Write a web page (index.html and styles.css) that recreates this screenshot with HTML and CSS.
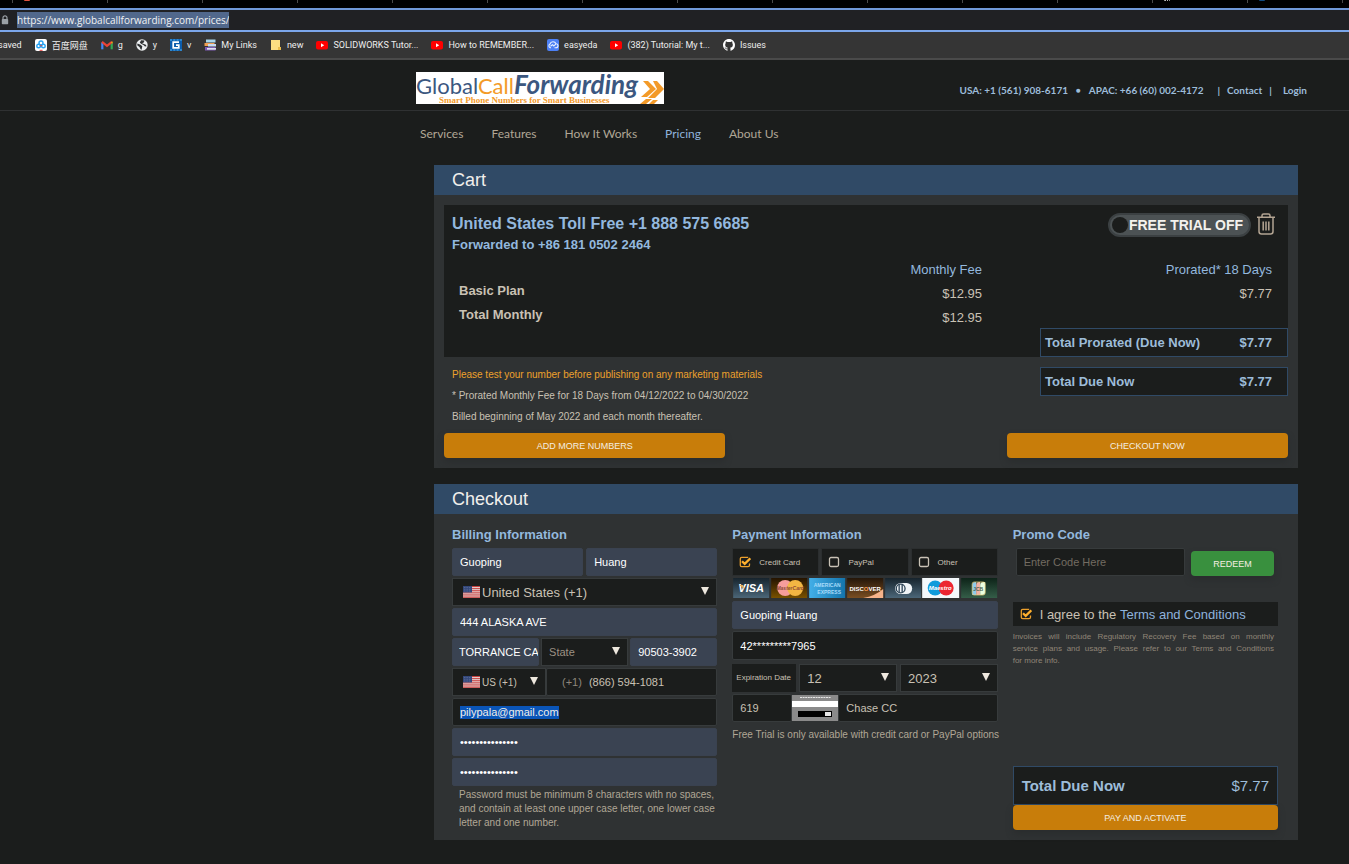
FILE: index.html
```html
<!DOCTYPE html>
<html lang="en">
<head>
<meta charset="utf-8">
<title>Global Call Forwarding - Prices</title>
<link rel="stylesheet" href="styles.css">
</head>
<body>
<svg width="0" height="0" class="defs" aria-hidden="true">
  <symbol id="yt" viewBox="0 0 12 12"><rect y="2" width="12" height="8.500" rx="2" fill="#f00"/><path d="M5 4.300v4l3.200-2z" fill="#fff"/></symbol>
  <symbol id="flag" viewBox="0 0 17 12">
    <rect width="17" height="12" fill="#e6dcdc"/>
    <path d="M0 .5h17M0 2.400h17M0 4.300h17M0 6.200h17M0 8.100h17M0 10h17M0 11.700h17" stroke="#c8403f"/>
    <rect width="9" height="6.500" fill="#33477a"/>
    <path d="M1 1.500h7M1 3.300h7M1 5h7" stroke="#8290b5" stroke-width=".6" stroke-dasharray=".7 1"/>
  </symbol>
  <symbol id="box" viewBox="0 0 12 12"><rect x="1.500" y="1.500" width="9" height="9" rx="1.500" fill="none" stroke="#c9c2b6" stroke-width="1.300"/></symbol>
  <symbol id="checked" viewBox="0 0 12 12"><path d="M10.500 7.500v1.800q0 1.400-1.400 1.400H2.700q-1.400 0-1.400-1.400V2.800q0-1.400 1.400-1.400h6.500" fill="none" stroke="#eda12c" stroke-width="1.300"/><path d="M3 5.200l2.700 2.700 5.600-5.500" fill="none" stroke="#ffb02e" stroke-width="2.200"/></symbol>
</svg>

<header class="browser">
  <div class="tabs"><i><b class="red"></b></i><i></i><i></i><i></i><i></i><i></i><i></i><i></i><i></i><i></i><i></i><i></i><i><b class="dots"></b></i><i><b class="blue"></b></i><i></i></div>
  <div class="address">
    <svg class="lock" viewBox="0 0 8 10"><path d="M2 4.500V2.800a2 2 0 0 1 4 0v1.700" fill="none" stroke="#9aa0a6" stroke-width="1.200"/><rect x=".8" y="4" width="6.400" height="5.200" rx=".8" fill="#9aa0a6"/></svg>
    <input class="url" type="text" aria-label="Address" value="https://www.globalcallforwarding.com/prices/">
  </div>
  <nav class="bookmarks" aria-label="Bookmarks">
    <a href="#">saved</a>
    <a href="#"><svg viewBox="0 0 12 12"><rect width="12" height="12" rx="2" fill="#fff"/><g fill="none" stroke-width="1.400"><circle cx="6" cy="4" r="2" stroke="#2aa5f5"/><circle cx="3.600" cy="7" r="1.800" stroke="#25a2f3"/><circle cx="8.400" cy="7" r="1.800" stroke="#2aa5f5"/></g><path d="M4.600 11.300h3" stroke="#e8413c"/><circle cx="6" cy="6.600" r=".8" fill="#e8413c"/></svg>百度网盘</a>
    <a href="#"><svg viewBox="0 0 12 12"><path d="M1.300 10.300V3.500" stroke="#4285f4" stroke-width="2.200"/><path d="M10.700 10.300V3.500" stroke="#34a853" stroke-width="2.200"/><path d="M1 2.800l5 4 5-4" fill="none" stroke="#ea4335" stroke-width="2.200"/><path d="M10 3.300l1.500-1v2.500z" fill="#fbbc04"/></svg>g</a>
    <a href="#"><svg viewBox="0 0 12 12"><circle cx="6" cy="6" r="5.700" fill="#eceff1"/><path d="M1.500 4.500l3 1.300 1.800 1.500-.7 3.400-1-.5L3.500 8 1.200 6.200zM5 1.200l3.500.4L7.800 3.500 6 4.300l3.800 1.500.8 1.500L9 7.500 7.500 6 5.500 5 3.800 3.700z" fill="#303335"/></svg>y</a>
    <a href="#"><svg viewBox="0 0 12 12"><rect width="12" height="12" fill="#0b5cad"/><path d="M0 1h12M0 11h12" stroke="#55b4ee" stroke-dasharray="2 1.300"/><path d="M9 3.200H3.200v5.700h5.600V6.200H6" fill="none" stroke="#fff" stroke-width="1.700"/></svg>v</a>
    <a href="#"><svg viewBox="0 0 12 12"><path d="M2 .5h9.500v3H2z" fill="#a9d6ea"/><path d="M.5 4h10v3H.5z" fill="#f0a052"/><path d="M4 5h8v2.500H4z" fill="#c6daf0"/><path d="M1 8h10.500v3.500H1z" fill="#7c5ab5"/><path d="M3 9h9v1.700H3z" fill="#dfe3ee"/></svg>My Links</a>
    <a href="#"><svg viewBox="0 0 12 12"><path d="M1 1h9v10H1z" fill="#fbdd82"/><path d="M8 8h3v3H8z" fill="#e9bc4d"/></svg>new</a>
    <a href="#"><svg><use href="#yt"/></svg>SOLIDWORKS Tutor...</a>
    <a href="#"><svg><use href="#yt"/></svg>How to REMEMBER...</a>
    <a href="#"><svg viewBox="0 0 12 12"><rect width="12" height="12" rx="2" fill="#4c80f5"/><path d="M4 8.700H3.300A2 2 0 0 1 3 5a3.200 3.200 0 0 1 6-.3 2 2 0 0 1 0 4H7.500M3.500 7.200l2-1.500 1.300 1.200 2-1.700" fill="none" stroke="#e9f0ff" stroke-width="1.100"/></svg>easyeda</a>
    <a href="#"><svg><use href="#yt"/></svg>(382) Tutorial: My t...</a>
    <a href="#"><svg viewBox="0 0 16 16"><path fill="#fff" d="M8 0C3.580 0 0 3.580 0 8c0 3.540 2.290 6.530 5.470 7.590.4.070.55-.17.55-.38 0-.19-.01-.82-.01-1.490-2.010.37-2.530-.49-2.690-.94-.09-.23-.48-.94-.82-1.130-.28-.15-.68-.52-.01-.53.63-.01 1.080.58 1.230.82.720 1.210 1.870.87 2.330.66.070-.52.28-.87.51-1.070-1.780-.2-3.640-.89-3.640-3.950 0-.87.31-1.590.82-2.150-.08-.2-.36-1.020.08-2.120 0 0 .67-.21 2.200.82.640-.18 1.320-.27 2-.27s1.360.09 2 .27c1.530-1.040 2.200-.82 2.200-.82.440 1.100.16 1.920.08 2.120.51.560.82 1.270.82 2.150 0 3.070-1.870 3.750-3.650 3.950.29.250.54.730.54 1.480 0 1.070-.01 1.930-.01 2.200 0 .21.150.46.55.38A8.010 8.010 0 0 0 16 8c0-4.420-3.580-8-8-8z"/></svg>Issues</a>
  </nav>
</header>

<div class="masthead">
  <a href="#" class="logo" aria-label="Global Call Forwarding">
    <svg viewBox="0 0 248 32">
      <rect width="248" height="32" fill="#fff"/>
      <text x="0" y="22" fill="#3b5780" class="wordmark">Global<tspan fill="#f39a28">Call</tspan><tspan class="forward">Forwarding</tspan></text>
      <text x="23" y="31" fill="#f39a28" class="tagline">Smart Phone Numbers for Smart Businesses</text>
      <g fill="#f39a28"><path d="M227 9h5l8 8-9 8h-6l9-8z"/><path d="M237 9h4l7 8-9 9h-7l9-9z"/><path d="M224 32l6-5h6l-6 5zM233 32l4-4h5l-4 4z"/></g>
    </svg>
  </a>
  <nav class="contact" aria-label="Contact">
    <a href="#">USA: +1 (561) 908-6171</a><span class="dot">●</span><a href="#">APAC: +66 (60) 002-4172</a><span class="bar first">|</span><a href="#">Contact</a><span class="bar">|</span><a href="#" class="login">Login</a>
  </nav>
</div>
<nav class="menu" aria-label="Main">
  <a href="#">Services</a><a href="#">Features</a><a href="#">How It Works</a><a href="#" class="active">Pricing</a><a href="#">About Us</a>
</nav>

<main>
  <section class="panel">
    <h1>Cart</h1>
    <div class="cart">
      <div class="order">
        <div class="order-head">
          <div>
            <h2>United States Toll Free +1 888 575 6685</h2>
            <p class="forwarded">Forwarded to +86 181 0502 2464</p>
          </div>
          <div class="actions">
            <button class="trial" type="button"><span class="knob"></span>FREE TRIAL OFF</button>
            <button class="trash" type="button" aria-label="Remove">
              <svg viewBox="0 0 20 22" fill="none" stroke="#b3a492" stroke-width="1.500"><path d="M1 4.300h18M6 4V2.600Q6 1 7.600 1h4.800Q14 1 14 2.600V4M3 5v13.500Q3 21 5.500 21h9q2.500 0 2.500-2.500V5M7.200 8.500v9M10 8.500v9M12.800 8.500v9"/></svg>
            </button>
          </div>
        </div>
        <table class="fees">
          <thead><tr><td></td><th scope="col">Monthly Fee</th><th scope="col">Prorated* 18 Days</th></tr></thead>
          <tbody>
            <tr><th scope="row">Basic Plan</th><td>$12.95</td><td>$7.77</td></tr>
            <tr><th scope="row">Total Monthly</th><td>$12.95</td><td></td></tr>
          </tbody>
        </table>
        <div class="total"><span>Total Prorated (Due Now)</span><span>$7.77</span></div>
      </div>
      <div class="summary">
        <div class="notes">
          <p class="warn">Please test your number before publishing on any marketing materials</p>
          <p>* Prorated Monthly Fee for 18 Days from 04/12/2022 to 04/30/2022</p>
          <p>Billed beginning of May 2022 and each month thereafter.</p>
        </div>
        <div class="total"><span>Total Due Now</span><span>$7.77</span></div>
      </div>
      <div class="cart-actions">
        <button class="btn" type="button">ADD MORE NUMBERS</button>
        <button class="btn last" type="button">CHECKOUT NOW</button>
      </div>
    </div>
  </section>

  <section class="panel">
    <h1>Checkout</h1>
    <form class="checkout">
      <div class="column">
        <h3>Billing Information</h3>
        <div class="fields">
          <div class="row halves">
            <input class="field filled" aria-label="First name" value="Guoping">
            <input class="field filled" aria-label="Last name" value="Huang">
          </div>
          <div class="picker big">
            <svg class="flag"><use href="#flag"/></svg>
            <select aria-label="Country"><option>United States (+1)</option></select>
          </div>
          <input class="field filled" aria-label="Address line" value="444 ALASKA AVE">
          <div class="row thirds">
            <input class="field filled city" aria-label="City" value="TORRANCE CA">
            <div class="picker state"><select aria-label="State"><option>State</option></select></div>
            <input class="field filled" aria-label="Zip code" value="90503-3902">
          </div>
          <div class="row phone">
            <div class="picker code">
              <svg class="flag"><use href="#flag"/></svg>
              <select aria-label="Phone country"><option>US (+1)</option></select>
            </div>
            <label class="field phone-box"><span>(+1)</span><input aria-label="Phone" value="(866) 594-1081"></label>
          </div>
          <div class="field email-box"><input class="selected" aria-label="Email" value="pilypala@gmail.com"></div>
          <input class="field filled" type="password" aria-label="Password" value="passwordsecret1">
          <input class="field filled" type="password" aria-label="Confirm password" value="passwordsecret1">
        </div>
        <p class="hint">Password must be minimum 8 characters with no spaces, and contain at least one upper case letter, one lower case letter and one number.</p>
      </div>

      <div class="column">
        <h3>Payment Information</h3>
        <div class="fields">
          <div class="row methods">
            <label><input type="checkbox" checked><svg class="on"><use href="#checked"/></svg><svg class="off"><use href="#box"/></svg>Credit Card</label>
            <label><input type="checkbox"><svg class="on"><use href="#checked"/></svg><svg class="off"><use href="#box"/></svg>PayPal</label>
            <label><input type="checkbox"><svg class="on"><use href="#checked"/></svg><svg class="off"><use href="#box"/></svg>Other</label>
          </div>
          <svg class="cards" viewBox="0 0 265 21" role="img" aria-label="Accepted cards">
            <defs>
              <linearGradient id="navy" x2="0" y2="1"><stop offset="0" stop-color="#17242d"/><stop offset="1" stop-color="#4b6678"/></linearGradient>
              <linearGradient id="brown" x2="0" y2="1"><stop offset="0" stop-color="#241300"/><stop offset="1" stop-color="#795100"/></linearGradient>
              <linearGradient id="sky"><stop offset="0" stop-color="#43afe8"/><stop offset="1" stop-color="#1474ac"/></linearGradient>
              <linearGradient id="rust" x2="0" y2="1"><stop offset="0" stop-color="#241609"/><stop offset="1" stop-color="#7a4e22"/></linearGradient>
              <linearGradient id="green" x2="0" y2="1"><stop offset="0" stop-color="#0d2318"/><stop offset="1" stop-color="#345d48"/></linearGradient>
            </defs>
            <rect x="1" width="36" height="20" fill="url(#navy)"/><text x="19" y="14" class="visa">VISA</text><path d="M7 7h4l1 4z" fill="#e4ae58"/>
            <rect x="39" width="36" height="20" fill="url(#brown)"/><circle cx="53" cy="10" r="8" fill="#f79d9c"/><circle cx="63" cy="10" r="8" fill="#f2b643"/><text x="58" y="12" class="mc">MasterCard</text>
            <rect x="77" width="36" height="20" fill="url(#sky)"/><text x="95" y="9" class="amex">AMERICAN</text><text x="97" y="16" class="amex">EXPRESS</text>
            <rect x="115" width="36" height="20" fill="url(#rust)"/><path d="M131 20q12-2 20-9v9z" fill="#f6b38a"/><text x="133" y="13" class="disc">DISC<tspan fill="#ff9c4c">O</tspan>VER</text>
            <rect x="153" width="36" height="20" fill="url(#navy)"/><rect x="163" y="5" width="17" height="11" rx="5.500" fill="#f0f4f7"/><circle cx="168.500" cy="10.500" r="4.400" fill="#f0f4f7" stroke="#2c4355" stroke-width="1.300"/><path d="M167 7v7M170 7v7" stroke="#2c4355" stroke-width="1.300"/>
            <rect x="190" width="37" height="20" fill="#f3f8fb"/><circle cx="203" cy="10" r="7.500" fill="#109bdb"/><circle cx="214" cy="10" r="7.500" fill="#ec2531"/><text x="208" y="12" class="maestro">Maestro</text>
            <rect x="229" width="36" height="20" fill="url(#green)"/><path d="M240 7q0-3 3-3h1v13h-4z" fill="#8ecbea"/><path d="M244 7q0-3 3-3h1v13h-4z" fill="#f1b2a4"/><path d="M248 7q0-3 3-3h2v10q0 3-3 3h-2z" fill="#eaffe1"/><rect x="240" y="4" width="13" height="13" rx="2" fill="none" stroke="#f1d17a" stroke-width=".7"/><text x="246" y="13" class="jcb">JCB</text>
          </svg>
          <input class="field filled" aria-label="Name on card" value="Guoping Huang">
          <input class="field number" aria-label="Card number" value="42*********7965">
          <div class="row expiry">
            <span class="caption">Expiration Date</span>
            <div class="picker big"><select aria-label="Expiration month"><option>12</option></select></div>
            <div class="picker big"><select aria-label="Expiration year"><option>2023</option></select></div>
          </div>
          <div class="row cvv">
            <input class="field" aria-label="Security code" value="619">
            <svg viewBox="0 0 46 26"><rect width="46" height="26" fill="#8a8a8a"/><path d="M8 2.500h31" stroke="#e6e6e6" stroke-dasharray="2 .6"/><rect y="6" width="46" height="6" fill="#fff"/><rect x="6" y="16" width="34" height="6" fill="#000"/><rect x="33" y="17" width="6" height="4" fill="#e8e8e8"/></svg>
            <input class="field" aria-label="Card label" value="Chase CC">
          </div>
        </div>
        <p class="trial-note">Free Trial is only available with credit card or PayPal options</p>
      </div>

      <div class="column">
        <h3>Promo Code</h3>
        <div class="promo">
          <input class="field" aria-label="Promo code" placeholder="Enter Code Here">
          <button class="btn redeem" type="button">REDEEM</button>
        </div>
        <div class="agree">
          <label><input type="checkbox" checked><svg class="on"><use href="#checked"/></svg><svg class="off"><use href="#box"/></svg>I agree to the</label>&nbsp;<a href="#">Terms and Conditions</a>
        </div>
        <p class="fine">Invoices will include Regulatory Recovery Fee based on monthly service&nbsp;plans&nbsp;and usage. Please refer to our Terms and Conditions for&nbsp;more&nbsp;info.</p>
        <div class="pay">
          <div class="due"><strong>Total Due Now</strong><span>$7.77</span></div>
          <button class="btn" type="button">PAY AND ACTIVATE</button>
        </div>
      </div>
    </form>
  </section>
</main>
</body>
</html>
```

FILE: styles.css
```css
* { box-sizing: border-box; }
body {
  margin: 0;
  min-height: 100vh;
  background: #1b1d1c;
  color: #c9c1b4;
  font-family: "Liberation Sans", Arial, sans-serif;
  font-size: 11px;
}
h1, h2, h3, p { margin: 0; }
a { color: inherit; text-decoration: none; }
input, select, button { font-family: inherit; margin: 0; padding: 0; border: 0; min-width: 0; color: inherit; }
svg { display: block; flex: none; }
.defs { position: absolute; }

/* browser chrome */
.browser { font-family: "Open Sans", "Noto Sans CJK SC", sans-serif; overflow: hidden; }
.tabs { display: flex; height: 8px; padding-left: 12px; background: #000; }
.tabs i { flex: none; width: 95px; height: 3px; padding-left: 11px; border-left: 1px solid #4a4a4a; }
.tabs b { display: block; width: 6px; height: 1px; border-radius: 0 0 3px 3px; }
.tabs .red { background: #e0533f; }
.tabs .dots { border: 1px dotted #bbb; border-width: 1px 0 0; }
.tabs .blue { background: #104a80; }
.address {
  display: flex;
  align-items: center;
  gap: 8px;
  height: 24px;
  padding-left: 1px;
  background: #202124;
  border-top: 2px solid #6f97d6;
  border-bottom: 2px solid #7ba6ea;
}
.lock { width: 8px; height: 10px; }
.url { width: 212px; height: 16px; background: #51688c; color: #f1f3f4; font-size: 10px; }
.bookmarks {
  display: flex;
  align-items: center;
  gap: 13px;
  height: 28px;
  background: #353535;
  border-bottom: 2px solid #4a4a4a;
  color: #eee;
  font-family: Roboto, "Noto Sans CJK SC", sans-serif;
  font-size: 9px;
  white-space: nowrap;
}
.bookmarks a { display: flex; align-items: center; gap: 5px; }
.bookmarks a:first-child { margin-left: -2px; }
.bookmarks svg { width: 12px; height: 12px; }

/* site header */
.masthead {
  display: flex;
  justify-content: space-between;
  align-items: center;
  height: 51px;
  padding: 6px 42px 0 416px;
  border-bottom: 1px solid #2f3132;
}
.masthead, .menu { font-family: Lato, sans-serif; }
.logo svg { width: 248px; height: 32px; }
.wordmark { font-size: 22px; }
.forward { font-size: 26px; font-weight: 700; font-style: italic; }
.tagline { font-family: "Liberation Serif", serif; font-size: 9px; font-weight: 700; }
.contact { display: flex; align-items: center; color: #9dbcd9; font-size: 10px; font-weight: 700; margin-top: 4px; }
.dot { margin: 0 8px; font-size: 8px; }
.bar { margin: 0 7px; }
.bar.first { margin-left: 14px; }
.login { margin-left: 4px; }
.menu { display: flex; gap: 28px; padding: 16px 0 0 420px; height: 54px; font-size: 12px; line-height: 14px; color: #b1a796; }
.menu .active { color: #8fb3dc; }

/* panels */
main { padding: 0 51px 24px 434px; }
.panel { background: #2f3233; }
.panel + .panel { margin-top: 16px; }
.panel h1 { padding-left: 18px; background: #304a66; color: #f1efec; font-size: 18px; font-weight: 400; line-height: 30px; }
.cart { padding: 10px; }
.order { background: #1b1d1c; padding-top: 8px; }
.order-head { display: flex; justify-content: space-between; padding: 0 12px 0 8px; color: #93b8de; }
.order h2 { font-size: 16px; line-height: 22px; }
.forwarded { font-size: 13px; font-weight: 700; line-height: 20px; }
.actions { display: flex; align-items: flex-start; gap: 5px; }
.trial {
  display: flex;
  align-items: center;
  gap: 1px;
  height: 24px;
  padding: 0 6px 0 2px;
  border: 2px solid #3b4042;
  border-radius: 12px;
  background: #4c5254;
  color: #f4f2ee;
  font-size: 14px;
  font-weight: 700;
}
.knob { width: 16px; height: 16px; border-radius: 50%; background: #1b1d1c; }
.trash { background: none; }
.trash svg { width: 20px; height: 22px; }
.fees { width: 100%; margin-top: 3px; border-collapse: collapse; table-layout: fixed; font-size: 13px; line-height: 18px; }
.fees td, .fees th { padding: 3px 16px 3px 0; text-align: right; font-weight: 400; }
.fees thead th { color: #93b8de; }
.fees tr > :first-child { width: 31%; }
.fees tbody th { padding: 0 0 6px 15px; text-align: left; font-weight: 700; }
.fees tbody tr:last-child > * { padding-bottom: 1px; vertical-align: top; }
.fees tr > :last-child { width: 290px; }
.total {
  display: flex;
  justify-content: space-between;
  align-items: center;
  width: 248px;
  height: 29px;
  margin-left: auto;
  padding: 0 15px 0 4px;
  background: #1b1d1c;
  border: 1px solid #304a66;
  color: #9dbcd9;
  font-size: 13px;
  font-weight: 700;
}
.summary { display: flex; align-items: flex-start; justify-content: space-between; padding-top: 10px; }
.summary .total { margin: 0; }
.notes { padding: 0 0 6px 8px; font-size: 10px; line-height: 21px; margin-top: -3px; }
.notes .warn { color: #eda12c; }
.cart-actions { display: grid; grid-template-columns: repeat(3, 1fr); }
.cart-actions .last { grid-column: 3; }
.btn {
  height: 25px;
  border-radius: 4px;
  background: #c87d0a;
  color: #f4eee2;
  font-size: 9px;
  box-shadow: 0 4px 6px #2a2d2e;
}

/* checkout */
.checkout { display: grid; grid-template-columns: repeat(3, minmax(0, 1fr)); gap: 15px; padding: 10px 20px 10px 18px; }
.column { display: flex; flex-direction: column; }
.checkout h3 { color: #93b8de; font-size: 13px; line-height: 22px; margin-bottom: 2px; }
.fields, .row { display: grid; grid-template-columns: minmax(0, 1fr); gap: 2px; }
.row.halves { grid-template-columns: 1fr 1fr; gap: 3px; }
.row.thirds { grid-template-columns: 1fr 1fr 1fr; }
.row.phone { grid-template-columns: 94px minmax(0, 1fr); gap: 0; }
.field {
  width: 100%;
  height: 28px;
  padding: 0 7px;
  border: 1px solid #373b3c;
  border-radius: 2px;
  background: #1b1d1c;
  color: #c9c1b4;
  font-size: 11px;
}
.filled { background: #3a4352; color: #fff; border-color: #3a4250; }
.field.city { padding: 0 0 0 6px; }
.field.number { color: #fff; }
.picker { position: relative; display: flex; align-items: center; height: 28px; padding-left: 10px; border: 1px solid #373b3c; background: #1b1d1c; }
.picker select { flex: 1; height: 26px; appearance: none; background: none; padding-left: 2px; font-size: 11px; }
.picker.big select { font-size: 13px; }
.picker::after {
  content: "";
  position: absolute;
  right: 7px;
  top: 8px;
  border: 4px solid transparent;
  border-top: 8px solid #eee8de;
  border-bottom: 0;
  pointer-events: none;
}
.flag { width: 17px; height: 12px; }
.state { padding-left: 5px; color: #9b9183; }
.code select { font-size: 10px; }
.phone-box { display: flex; align-items: center; gap: 7px; padding-left: 15px; }
.phone-box span { color: #8f877b; }
.phone-box input { flex: 1; background: none; font-size: 11px; }
.email-box { display: flex; align-items: center; }
.selected { width: auto; field-sizing: content; height: 13px; background: #0a55b8; color: #f0eee9; font-size: 11px; }
.hint { padding: 2px 0 0 7px; font-size: 10px; line-height: 14px; color: #b1a796; }
.row.methods { grid-template-columns: repeat(3, 1fr); }
.methods label { position: relative; display: flex; align-items: center; gap: 8px; height: 28px; padding-left: 6px; background: #1b1d1c; border: 1px solid #2b2e2f; font-size: 8px; }
label input[type="checkbox"] { position: absolute; width: 12px; height: 12px; opacity: 0; }
label input[type="checkbox"] ~ svg { width: 12px; height: 12px; }
input:checked ~ .off, input:not(:checked) ~ .on { display: none; }
.cards { width: 100%; height: 21px; }
.cards text { text-anchor: middle; font-weight: 700; fill: #fff; }
.cards .visa { font-size: 11px; font-style: italic; }
.cards .mc { font-size: 5px; font-style: italic; fill: #8d4a35; }
.cards .amex { font-size: 5px; fill: #a9dcfa; }
.cards .disc { font-size: 6px; }
.cards .maestro { font-size: 6px; font-style: italic; }
.cards .jcb { font-size: 5px; fill: #4c6553; }
.fields .number { height: 29px; margin-bottom: 2px; }
.row.expiry { grid-template-columns: 64px 1fr 1fr; gap: 3px; }
.caption { padding-left: 4px; background: #1b1d1c; font-size: 8px; line-height: 28px; white-space: nowrap; }
.expiry .picker { padding-left: 5px; }
.row.cvv { grid-template-columns: 60px 46px 1fr; gap: 0; align-items: center; }
.cvv svg { width: 46px; height: 26px; }
.trial-note { font-size: 10px; line-height: 14px; margin-top: 6px; color: #b1a796; white-space: nowrap; }
.promo { display: grid; grid-template-columns: 1fr 83px; gap: 6px; align-items: end; padding: 0 4px 0 3px; }
.promo ::placeholder { color: #736c62; opacity: 1; }
.redeem { background: #39903e; }
.agree { display: flex; align-items: center; height: 24px; margin-top: 26px; padding-left: 7px; background: #1b1d1c; font-size: 13px; }
.agree label { display: flex; align-items: center; gap: 8px; }
.agree a { color: #8fb3dc; }
.fine { padding-right: 4px; margin-top: 5px; font-size: 8px; line-height: 12px; text-align: justify; color: #8f8577; }
.pay { display: grid; margin-top: auto; }
.due { display: flex; justify-content: space-between; align-items: center; height: 39px; padding: 0 8px; background: #1b1d1c; border: 1px solid #304a66; color: #9dbcd9; font-size: 15px; }
```
